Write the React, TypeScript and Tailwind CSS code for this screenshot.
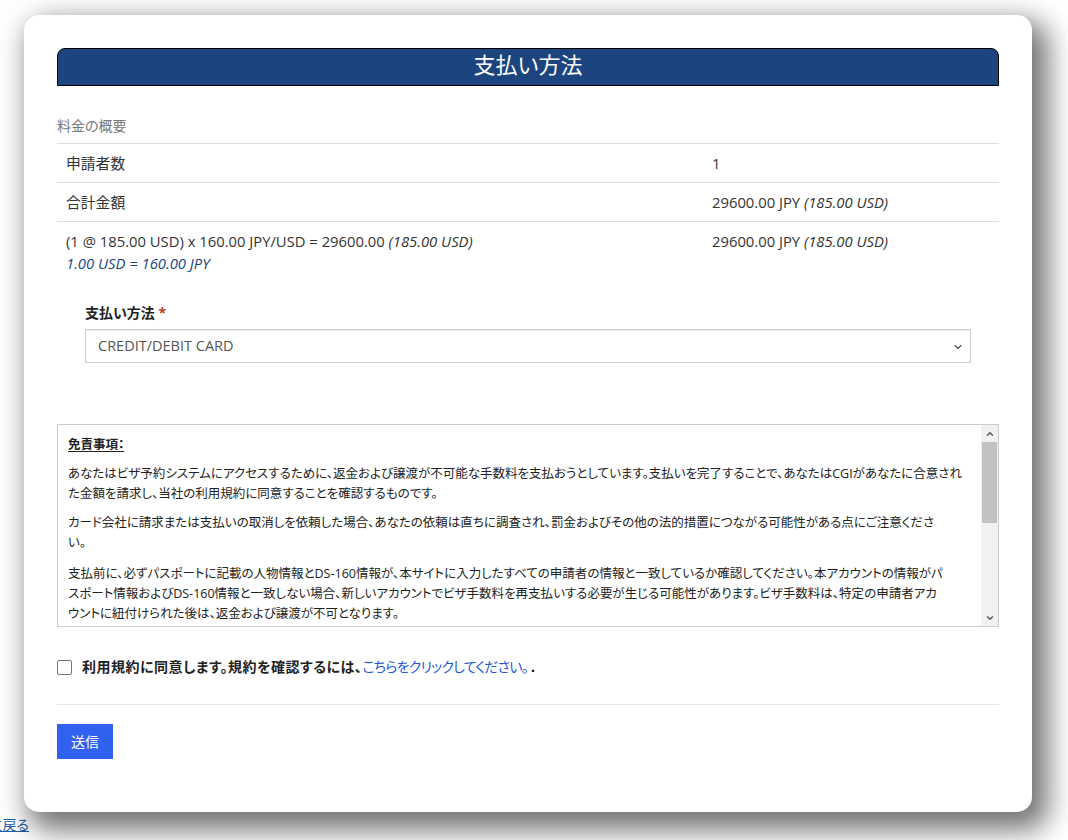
import { ChevronDown, ChevronUp } from 'lucide-react'

const FONT = "font-['Open_Sans','Noto_Sans_CJK_JP',sans-serif] [font-feature-settings:'palt']"

const rows = [
  { label: '申請者数', value: <>1</> },
  {
    label: '合計金額',
    value: (
      <>
        29600.00 JPY <i>(185.00 USD)</i>
      </>
    ),
  },
]

// disclaimer paragraphs, split where the original wraps
const paragraphs = [
  [
    'あなたはビザ予約システムにアクセスするために、返金および譲渡が不可能な手数料を支払おうとしています。支払いを完了することで、あなたはCGIがあなたに合意され',
    'た金額を請求し、当社の利用規約に同意することを確認するものです。',
  ],
  [
    'カード会社に請求または支払いの取消しを依頼した場合、あなたの依頼は直ちに調査され、罰金およびその他の法的措置につながる可能性がある点にご注意くださ',
    'い。',
  ],
  [
    '支払前に、必ずパスポートに記載の人物情報とDS-160情報が、本サイトに入力したすべての申請者の情報と一致しているか確認してください。本アカウントの情報がパ',
    'スポート情報およびDS-160情報と一致しない場合、新しいアカウントでビザ手数料を再支払いする必要が生じる可能性があります。ビザ手数料は、特定の申請者アカ',
    'ウントに紐付けられた後は、返金および譲渡が不可となります。',
  ],
]

function FeeSummary() {
  return (
    <div className="mt-[22px] text-[14.8px] text-[#333]">
      <div className="py-2 text-[14px] leading-[19px] text-[#777]">料金の概要</div>
      {rows.map((r) => (
        <div key={r.label} className="grid grid-cols-[646px_1fr] border-t border-[#ddd]">
          <div className="px-[9px] py-2 leading-[22px]">{r.label}</div>
          <div className="px-[9px] py-2 leading-[22px]">{r.value}</div>
        </div>
      ))}
      <div className="grid grid-cols-[646px_1fr] border-t border-[#ddd]">
        <div className="px-[9px] py-2 leading-[22px]">
          <div>
            (1 @ 185.00 USD) x 160.00 JPY/USD = 29600.00 <i>(185.00 USD)</i>
          </div>
          <div className="italic text-[#1c4580]">1.00 USD = 160.00 JPY</div>
        </div>
        <div className="px-[9px] py-2 leading-[22px]">
          29600.00 JPY <i>(185.00 USD)</i>
        </div>
      </div>
    </div>
  )
}

function PaymentSelect() {
  return (
    <div className="mt-[22px] px-[28px]">
      <label className="mb-[7px] block text-[14px] font-bold leading-[18px] text-[#222]">
        支払い方法 <span className="text-[#c0392b]">*</span>
      </label>
      <div className="relative flex h-[34px] items-center border border-[#ccc] bg-white pl-3 text-[14.5px] text-[#555] shadow-[inset_0_1px_1px_rgba(0,0,0,0.075)]">
        CREDIT/DEBIT CARD
        <ChevronDown className="absolute right-[6px] top-[11px] h-[12px] w-[12px] text-[#555]" strokeWidth={2.5} />
      </div>
    </div>
  )
}

function Scrollbar() {
  return (
    <div className="flex w-[17px] shrink-0 flex-col bg-[#f1f1f1]">
      <div className="flex h-[17px] items-center justify-center">
        <ChevronUp className="h-[10px] w-[10px] text-[#505050]" strokeWidth={3} />
      </div>
      <div className="flex-1 px-[1px]">
        <div className="h-[81px] bg-[#c1c1c1]" />
      </div>
      <div className="flex h-[17px] items-center justify-center">
        <ChevronDown className="h-[10px] w-[10px] text-[#505050]" strokeWidth={3} />
      </div>
    </div>
  )
}

function Disclaimer() {
  return (
    <div className="mt-[61px] flex h-[203px] border border-[#ccc] text-[12.5px] leading-[20px] text-[#222]">
      <div className="flex-1 overflow-hidden pl-[10px] pt-[10px]">
        <p className="font-bold underline underline-offset-2">免責事項：</p>
        {paragraphs.map((lines, i) => (
          <p key={i} className={i === 2 ? 'mt-[11px]' : 'mt-[9px]'}>
            {lines.map((l) => (
              <span key={l} className="block whitespace-nowrap">
                {l}
              </span>
            ))}
          </p>
        ))}
      </div>
      <Scrollbar />
    </div>
  )
}

export default function App() {
  return (
    <div className={`relative h-[840px] w-[1068px] overflow-hidden bg-white ${FONT}`}>
      {/* page underneath */}
      <a className="absolute left-[-11px] top-[814px] text-[14px] text-[#1b5ea6] underline">に戻る</a>

      {/* modal */}
      <div className="absolute left-[24px] top-[15px] h-[797px] w-[1008px] rounded-[15px] bg-white px-[33px] pt-[33px] shadow-[10px_12px_28px_6px_rgba(0,0,0,0.55)]">
        <div className="flex h-[38px] items-center justify-center rounded-t-[8px] border border-black bg-[#1c4580] pb-[5px] text-[22px] text-white">
          支払い方法
        </div>

        <FeeSummary />
        <PaymentSelect />
        <Disclaimer />

        <div className="mt-[30px] flex items-center text-[14px] leading-[20px]">
          <span className="h-[15px] w-[15px] rounded-[2px] border border-[#767676] bg-white" />
          <span className="ml-[10px] font-bold tracking-[0.5px] text-[#222]">利用規約に同意します。規約を確認するには、</span>
          <a className="tracking-[-0.8px] text-[#2557d6]">こちらをクリックしてください。</a>
          <span className="ml-[3px] font-bold">.</span>
        </div>

        <hr className="mt-[27px] border-[#e5e5e5]" />

        <button className="mt-[19px] h-[35px] w-[56px] bg-[#3061ef] text-[14px] text-white">送信</button>
      </div>
    </div>
  )
}
